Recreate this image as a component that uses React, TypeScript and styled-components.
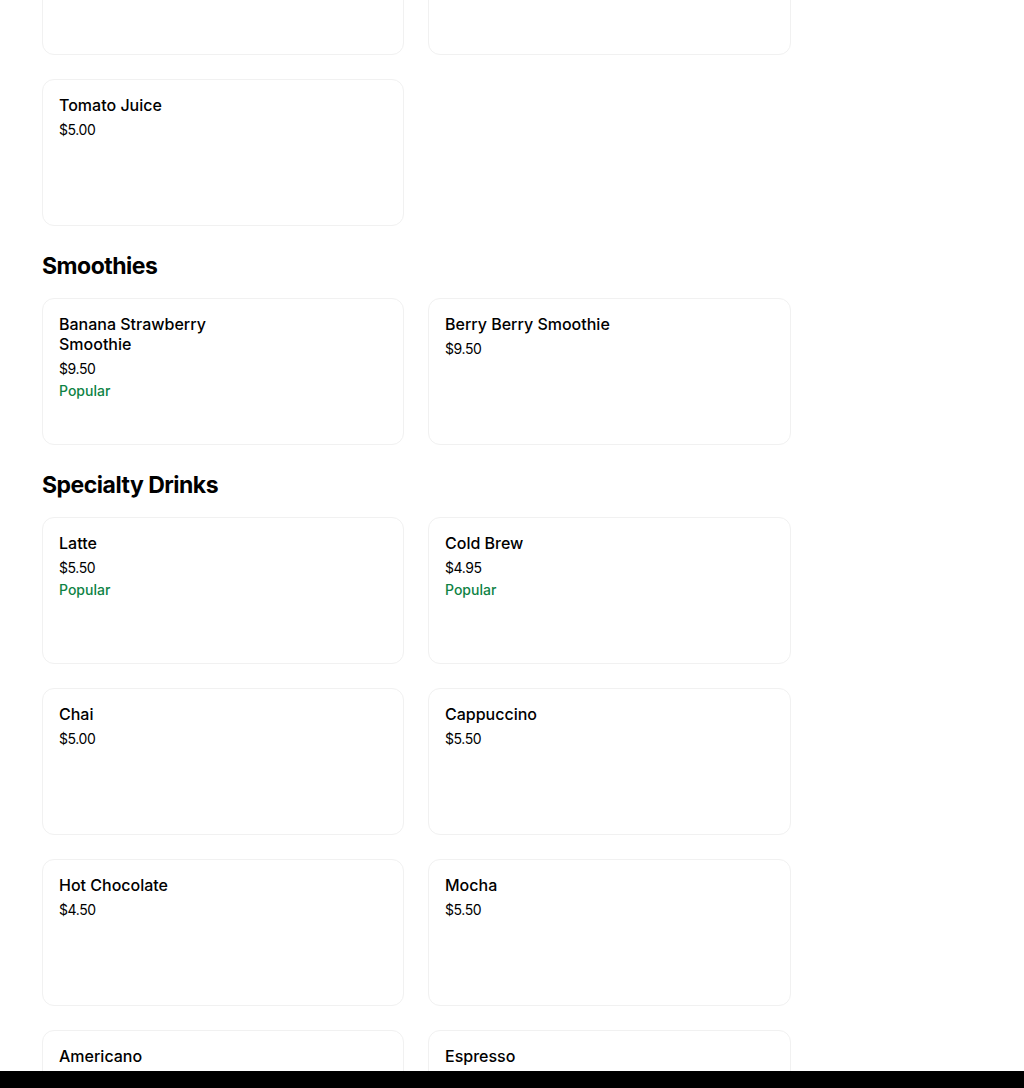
import styled, { createGlobalStyle } from 'styled-components';

const GlobalStyle = createGlobalStyle`
  html, body {
    margin: 0;
    padding: 0;
    background: #ffffff;
    font-family: Inter, 'Noto Sans', 'Liberation Sans', sans-serif;
    color: #000000;
    overflow: hidden;
  }
  * {
    box-sizing: border-box;
  }
`;

const Page = styled.main`
  width: 1024px;
  height: 1088px;
  overflow: hidden;
  padding-left: 42px;
`;

// the page is scrolled: the row above Tomato Juice is only partly visible
const Content = styled.div`
  width: 749px;
  margin-top: -92px;
`;

const Section = styled.section`
  & + & {
    margin-top: 24px;
  }
`;

const SectionTitle = styled.h2`
  margin: 0 0 16px;
  font-size: 23px;
  line-height: 32px;
  font-weight: 700;
  letter-spacing: -0.5px;
`;

const Grid = styled.div`
  display: grid;
  grid-template-columns: 362px 363px;
  column-gap: 24px;
  row-gap: 24px;
`;

const Card = styled.div`
  height: 147px;
  border: 1px solid #f1f1f1;
  border-radius: 12px;
  padding: 15px 16px;
  display: flex;
  flex-direction: column;
  align-items: flex-start;
`;

const ItemName = styled.div`
  max-width: 200px;
  font-size: 16px;
  line-height: 20px;
  font-weight: 500;
  letter-spacing: 0;
`;

const Price = styled.div`
  margin-top: 5px;
  font-size: 14px;
  line-height: 20px;
  font-weight: 400;
  letter-spacing: -0.4px;
`;

const Badge = styled.div`
  margin-top: 2px;
  font-size: 14px;
  line-height: 20px;
  font-weight: 500;
  color: #0e8345;
`;

const BottomBar = styled.div`
  position: fixed;
  left: 0;
  right: 0;
  bottom: 0;
  height: 17px;
  background: #000000;
`;

type Item = { name?: string; price?: string; popular?: boolean };

const SECTIONS: { title?: string; items: Item[] }[] = [
  {
    items: [
      {},
      {},
      { name: 'Tomato Juice', price: '$5.00' },
    ],
  },
  {
    title: 'Smoothies',
    items: [
      { name: 'Banana Strawberry Smoothie', price: '$9.50', popular: true },
      { name: 'Berry Berry Smoothie', price: '$9.50' },
    ],
  },
  {
    title: 'Specialty Drinks',
    items: [
      { name: 'Latte', price: '$5.50', popular: true },
      { name: 'Cold Brew', price: '$4.95', popular: true },
      { name: 'Chai', price: '$5.00' },
      { name: 'Cappuccino', price: '$5.50' },
      { name: 'Hot Chocolate', price: '$4.50' },
      { name: 'Mocha', price: '$5.50' },
      { name: 'Americano' },
      { name: 'Espresso' },
    ],
  },
];

export default function App() {
  return (
    <>
      <GlobalStyle />
      <Page>
        <Content>
          {SECTIONS.map(({ title, items }, i) => (
            <Section key={title || i}>
              {title && <SectionTitle>{title}</SectionTitle>}
              <Grid>
                {items.map((item, j) => (
                  <Card key={item.name || j}>
                    {item.name && <ItemName>{item.name}</ItemName>}
                    {item.price && <Price>{item.price}</Price>}
                    {item.popular && <Badge>Popular</Badge>}
                  </Card>
                ))}
              </Grid>
            </Section>
          ))}
        </Content>
      </Page>
      <BottomBar />
    </>
  );
}
